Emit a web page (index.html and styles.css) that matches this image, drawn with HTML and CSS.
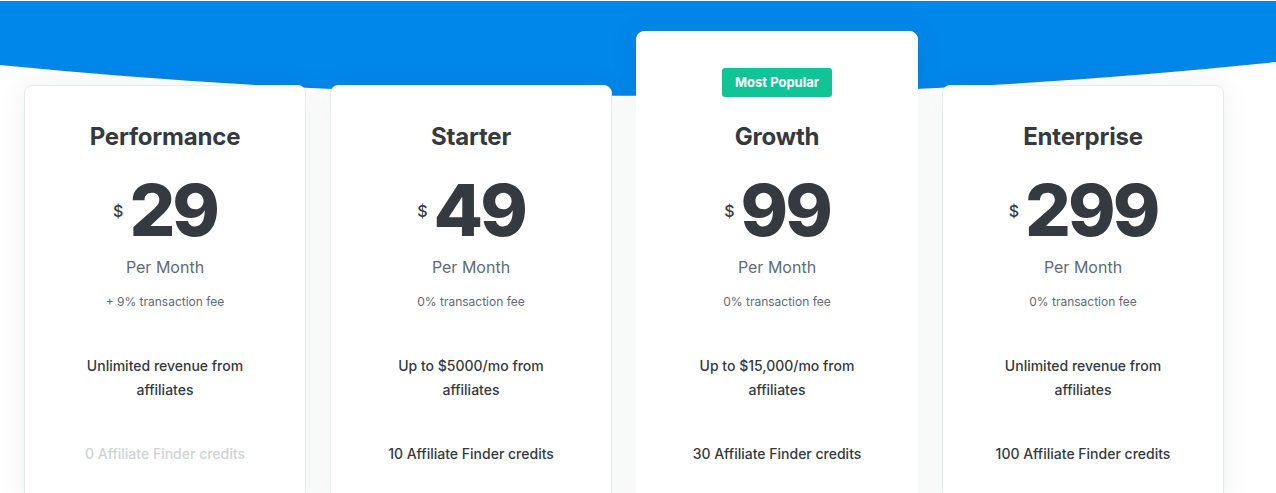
FILE: index.html
```html
<!DOCTYPE html>
<html>
<head>
<meta charset="utf-8">
<link rel="stylesheet" href="styles.css">
</head>
<body>
<div class="hero">
  <svg class="wave" width="1276" height="130" viewBox="0 0 1276 130" preserveAspectRatio="none">
    <path d="M0,1 H1276 V62 Q638,128 0,65 Z" fill="#0087ea"/>
  </svg>
  <div class="plans">
    <div class="card">
      <h2 class="name">Performance</h2>
      <div class="price"><span class="cur">$</span><span class="amt">29</span></div>
      <div class="per">Per Month</div>
      <div class="fee">+ 9% transaction fee</div>
      <div class="feat">Unlimited revenue from affiliates</div>
      <div class="credits muted">0 Affiliate Finder credits</div>
    </div>
    <div class="card">
      <h2 class="name">Starter</h2>
      <div class="price"><span class="cur">$</span><span class="amt">49</span></div>
      <div class="per">Per Month</div>
      <div class="fee">0% transaction fee</div>
      <div class="feat">Up to $5000/mo from affiliates</div>
      <div class="credits">10 Affiliate Finder credits</div>
    </div>
    <div class="card popular">
      <div class="badge">Most Popular</div>
      <h2 class="name">Growth</h2>
      <div class="price"><span class="cur">$</span><span class="amt">99</span></div>
      <div class="per">Per Month</div>
      <div class="fee">0% transaction fee</div>
      <div class="feat">Up to $15,000/mo from affiliates</div>
      <div class="credits">30 Affiliate Finder credits</div>
    </div>
    <div class="card">
      <h2 class="name">Enterprise</h2>
      <div class="price"><span class="cur">$</span><span class="amt">299</span></div>
      <div class="per">Per Month</div>
      <div class="fee">0% transaction fee</div>
      <div class="feat">Unlimited revenue from affiliates</div>
      <div class="credits">100 Affiliate Finder credits</div>
    </div>
  </div>
</div>
</body>
</html>
```
FILE: styles.css
```css
* { box-sizing: border-box; }
html, body { margin: 0; padding: 0; background: #fff; }
html { overflow: hidden; height: 493px; }
body {
  font-family: Inter, "Liberation Sans", sans-serif;
  color: #343a40;
  overflow: hidden;
  height: 493px;
}
.hero { position: relative; width: 1276px; height: 493px; overflow: hidden; }
.wave { position: absolute; top: 0; left: 0; display: block; }
.plans {
  position: relative;
  display: flex;
  align-items: flex-start;
  gap: 24px;
  padding: 31px 0 0 24px;
}
.card {
  width: 282px;
  height: 430px;
  margin-top: 54px;
  background: #fff;
  border: 1px solid #e9ecef;
  border-radius: 8px;
  box-shadow: 0 0 28px rgba(30, 40, 60, 0.07);
  padding: 36px 20px 0;
  display: flex;
  flex-direction: column;
  align-items: center;
  text-align: center;
}
.card.popular { margin-top: 0; height: 484px; border-color: #fff; }
.badge {
  background: #10c496;
  color: #fff;
  font-size: 13px;
  font-weight: 700;
  padding: 0 13px;
  height: 29px;
  line-height: 29px;
  border-radius: 3px;
  margin-bottom: 25px;
}
.name {
  margin: 0;
  font-size: 24px;
  font-weight: 700;
  line-height: 30px;
  letter-spacing: -0.2px;
}
.price {
  display: flex;
  align-items: center;
  margin-top: 18px;
  height: 80px;
}
.cur {
  font-size: 16px;
  font-weight: 500;
  margin-right: 6px;
  margin-top: 2px;
}
.amt {
  font-size: 72px;
  font-weight: 800;
  line-height: 80px;
  letter-spacing: -3px;
}
.per {
  margin-top: 5px;
  font-size: 16px;
  line-height: 24px;
  color: #5f6b76;
}
.fee {
  margin-top: 14px;
  font-size: 12px;
  line-height: 18px;
  color: #5f6b76;
}
.feat {
  margin-top: 43px;
  font-size: 14px;
  font-weight: 500;
  line-height: 24px;
  width: 190px;
}
.credits {
  margin-top: 40px;
  font-size: 14px;
  font-weight: 500;
  line-height: 24px;
}
.credits.muted { color: #cfd3d6; }
```
